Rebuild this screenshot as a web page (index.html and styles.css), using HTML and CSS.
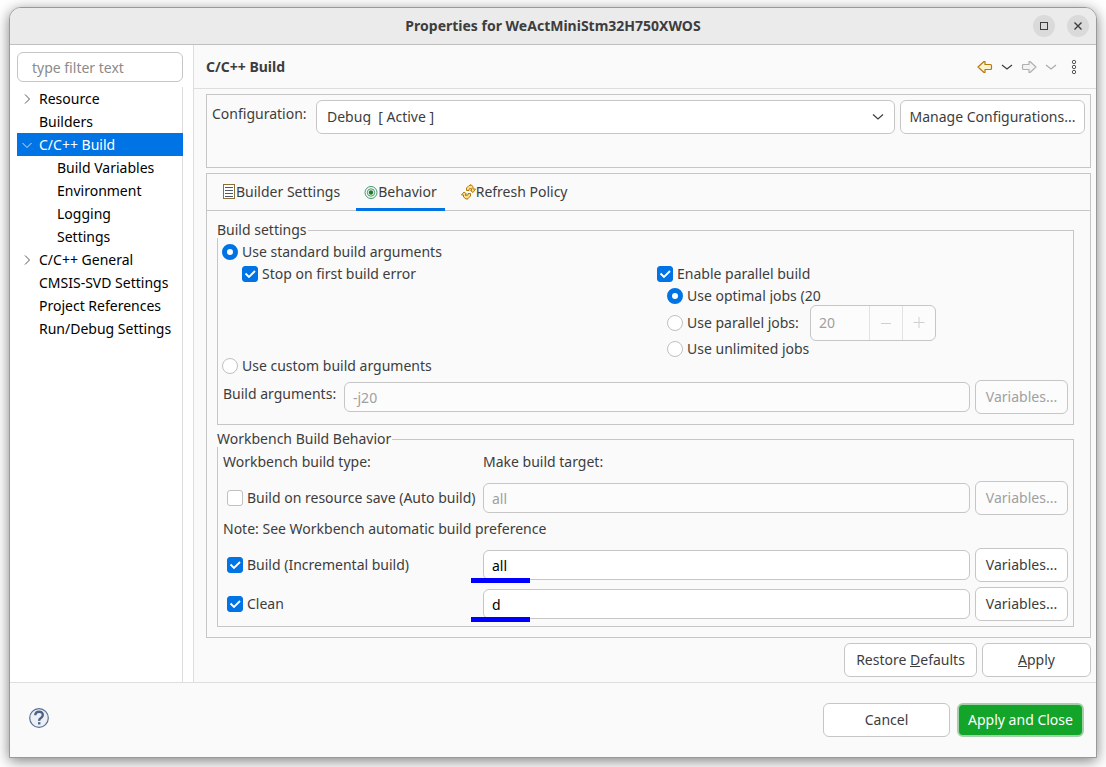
FILE: index.html
```html
<!DOCTYPE html>
<html lang="en">
<head>
  <meta charset="UTF-8">
  <title>Properties for WeActMiniStm32H750XWOS</title>
  <link rel="stylesheet" href="styles.css">
</head>

<body>

  <div class="window">
    <div class="titlebar">
      <h1>Properties for WeActMiniStm32H750XWOS</h1>
      <div class="window-buttons">
        <button type="button" aria-label="Maximize">
          <svg width="10" height="10" viewBox="0 0 10 10"><rect x="1.500" y="1.500" width="7" height="7" fill="none" stroke="#3d3d3d"/></svg>
        </button>
        <button type="button" aria-label="Close">
          <svg width="10" height="10" viewBox="0 0 10 10"><path d="M1.500 1.500l7 7M8.500 1.500l-7 7" fill="none" stroke="#3d3d3d" stroke-width="1.400"/></svg>
        </button>
      </div>
    </div>

    <div class="main">
      <div class="sidebar">
        <input type="text" class="filter" placeholder="type filter text" aria-label="Filter">
        <ul class="tree">
          <li><svg class="arrow" width="10" height="10" viewBox="0 0 10 10"><path d="M3 0.500l4.500 4.500l-4.500 4.500"/></svg>Resource</li>
          <li>Builders</li>
          <li class="selected"><svg class="arrow" width="10" height="10" viewBox="0 0 10 10"><path d="M0.500 3l4.500 4.500l4.500-4.500"/></svg>C/C++ Build</li>
          <li class="child">Build Variables</li>
          <li class="child">Environment</li>
          <li class="child">Logging</li>
          <li class="child">Settings</li>
          <li><svg class="arrow" width="10" height="10" viewBox="0 0 10 10"><path d="M3 0.500l4.500 4.500l-4.500 4.500"/></svg>C/C++ General</li>
          <li>CMSIS-SVD Settings</li>
          <li>Project References</li>
          <li>Run/Debug Settings</li>
        </ul>
      </div>

      <div class="page">
        <div class="page-header">
          <h2>C/C++ Build</h2>
          <div class="nav">
            <button type="button" aria-label="Back">
              <svg width="16" height="14" viewBox="0 0 16 14"><path d="M1 7l6-5.500h1v3h5.500q1 0 1 1v3q0 1-1 1H8v3H7z" fill="#fdf3cc" stroke="#b5790f" stroke-width="1.200" stroke-linejoin="round"/></svg>
            </button>
            <button type="button" aria-label="Back history">
              <svg width="12" height="8" viewBox="0 0 12 8"><path d="M1 2l5 4l5-4" fill="none" stroke="#3d3d3d" stroke-width="1.200"/></svg>
            </button>
            <button type="button" aria-label="Forward" disabled>
              <svg width="16" height="14" viewBox="0 0 16 14"><path d="M15 7L9 1.500H8v3H2.500q-1 0-1 1v3q0 1 1 1H8v3h1z" fill="#f3f3f3" stroke="#b0b0b0" stroke-width="1.200" stroke-linejoin="round"/></svg>
            </button>
            <button type="button" aria-label="Forward history" disabled>
              <svg width="12" height="8" viewBox="0 0 12 8"><path d="M1 2l5 4l5-4" fill="none" stroke="#aaa" stroke-width="1.200"/></svg>
            </button>
            <button type="button" aria-label="Menu" class="menu">
              <svg width="6" height="16" viewBox="0 0 6 16"><g fill="none" stroke="#555"><circle cx="3" cy="3" r="1.700"/><circle cx="3" cy="8" r="1.700"/><circle cx="3" cy="13" r="1.700"/></g></svg>
            </button>
          </div>
        </div>

        <div class="content">
          <div class="config">
            <label for="configuration">Configuration:</label>
            <div class="combo">
              <select id="configuration">
                <option>Debug&nbsp; [ Active ]</option>
                <option>Release</option>
              </select>
              <svg width="12" height="8" viewBox="0 0 12 8"><path d="M1 1.500l5 4.500l5-4.500" fill="none" stroke="#3d3d3d" stroke-width="1.200"/></svg>
            </div>
            <button type="button" class="btn">Manage Configurations...</button>
          </div>

          <div class="panel">
            <div class="tabs" role="tablist">
              <button type="button" role="tab">
                <svg width="14" height="16" viewBox="0 0 14 16"><rect x="1.500" y="0.500" width="11" height="14" fill="#fff" stroke="#8a7038"/><path d="M3 3.500h8M3 6.500h8M3 9.500h8M3 12.500h8" stroke="#4a5a6c"/></svg>Builder Settings
              </button>
              <button type="button" role="tab" class="active" aria-selected="true">
                <svg width="14" height="16" viewBox="0 0 14 16"><g fill="none" stroke="#3f9a68"><circle cx="7" cy="8.500" r="6"/><circle cx="7" cy="8.500" r="3.700"/></g><circle cx="7" cy="8.500" r="2.200" fill="#1f7a2a"/></svg>Behavior
              </button>
              <button type="button" role="tab">
                <svg width="15" height="16" viewBox="0 0 15 16"><g fill="#fbe08a" stroke="#b5790f" stroke-linejoin="round"><path d="M5.500 6.500V4L8 1.500h1.500v-1l2.500 2v2.500h2.500L12 8.500L9.500 6.500h1V4.500L8 5v1.500z"/><path d="M9.500 9.500v2.500L7 14.500v0.500H5L2.500 13v-2H0.500L3 8l2.500 2h-1v1.500L7 11V9.500z"/></g></svg>Refresh Policy
              </button>
            </div>

            <form class="panel-body">
              <fieldset>
                <legend>Build settings</legend>
                <label class="option"><input type="radio" name="arguments" checked>Use standard build arguments</label>
                <div class="standard">
                  <div class="left">
                    <label class="option"><input type="checkbox" checked>Stop on first build error</label>
                  </div>
                  <div class="right">
                    <label class="option"><input type="checkbox" checked>Enable parallel build</label>
                    <div class="jobs">
                      <label class="option optimal"><input type="radio" name="jobs" checked>Use optimal jobs (20)</label>
                      <div class="parallel">
                        <label class="option"><input type="radio" name="jobs">Use parallel jobs:</label>
                        <div class="spinner">
                          <input type="text" value="20" aria-label="Parallel jobs" disabled>
                          <button type="button" aria-label="Decrease" disabled><svg width="12" height="12" viewBox="0 0 12 12"><path d="M1 6.500h10" stroke="#d0d0d0"/></svg></button>
                          <button type="button" aria-label="Increase" disabled><svg width="12" height="12" viewBox="0 0 12 12"><path d="M0.500 5.500h11M6 0v11" stroke="#d0d0d0"/></svg></button>
                        </div>
                      </div>
                      <label class="option"><input type="radio" name="jobs">Use unlimited jobs</label>
                    </div>
                  </div>
                </div>
                <label class="option"><input type="radio" name="arguments">Use custom build arguments</label>
                <div class="arguments">
                  <label for="arguments">Build arguments:</label>
                  <input type="text" class="text" id="arguments" value="-j20" disabled>
                  <button type="button" class="btn" disabled>Variables...</button>
                </div>
              </fieldset>

              <fieldset>
                <legend>Workbench Build Behavior</legend>
                <div class="targets">
                  <span>Workbench build type:</span>
                  <span class="wide">Make build target:</span>

                  <label class="option"><input type="checkbox">Build on resource save (Auto build)</label>
                  <div class="target"><input type="text" class="text" value="all" aria-label="Auto build target" disabled></div>
                  <button type="button" class="btn" disabled>Variables...</button>

                  <span class="note">Note: See Workbench automatic build preference</span>

                  <label class="option"><input type="checkbox" checked>Build (Incremental build)</label>
                  <div class="target marked"><input type="text" class="text" value="all" aria-label="Incremental build target"></div>
                  <button type="button" class="btn">Variables...</button>

                  <label class="option last"><input type="checkbox" checked>Clean</label>
                  <div class="target marked last"><input type="text" class="text" value="d" aria-label="Clean target"></div>
                  <button type="button" class="btn last">Variables...</button>
                </div>
              </fieldset>
            </form>
          </div>

          <div class="page-buttons">
            <button type="button" class="btn restore">Restore <u>D</u>efaults</button>
            <button type="button" class="btn apply"><u>A</u>pply</button>
          </div>
        </div>
      </div>
    </div>

    <div class="footer">
      <button type="button" class="help" aria-label="Help">
        <svg width="20" height="20" viewBox="0 0 20 20"><circle cx="10" cy="10" r="9.300" fill="#eceff3" stroke="#5b6f94" stroke-width="1.200"/><path d="M6.300 7.300q0-3.500 3.800-3.500t3.700 3.200q0 1.700-1.900 2.900t-1.700 2.900" fill="none" stroke="#4d6088" stroke-width="2.400"/><rect x="9" y="14.200" width="2.400" height="2.200" fill="#4d6088"/></svg>
      </button>
      <button type="button" class="btn big">Cancel</button>
      <button type="button" class="btn big primary">Apply and Close</button>
    </div>
  </div>

</body>
</html>
```
FILE: styles.css
```css
* {
  box-sizing: border-box;
}

body {
  font-family: "Noto Sans", sans-serif;
  font-size: 14px;
  line-height: 16px;
  color: #3d3d3d;
  background: #fff;
  margin: 0;
  padding: 7px 9px 9px;
  min-height: 100vh;
  display: flex;
}

input,
select,
button {
  font: inherit;
  color: inherit;
  margin: 0;
}

button {
  padding: 0;
  border: none;
  background: none;
}

svg {
  flex: none;
}

.window {
  flex: 1;
  display: flex;
  flex-direction: column;
  background: #fafafa;
  border: 1px solid #999;
  border-radius: 12px 12px 0 0;
  box-shadow: 0 3px 14px rgba(0, 0, 0, 0.5);
  overflow: hidden;
}

/* title bar */
.titlebar {
  height: 37px;
  background: #ebebeb;
  border-bottom: 1px solid #bfbfbf;
  display: grid;
  grid-template-columns: 1fr auto 1fr;
  align-items: center;
}

.titlebar h1 {
  grid-column: 2;
  margin: 0;
  font-size: 14px;
}

.window-buttons {
  display: flex;
  justify-content: flex-end;
  gap: 12px;
  padding-right: 7px;
}

.window-buttons button {
  width: 22px;
  height: 22px;
  border-radius: 50%;
  background: #dadada;
  display: flex;
  align-items: center;
  justify-content: center;
}

.main {
  flex: 1;
  display: flex;
  border-bottom: 1px solid #dedede;
}

/* tree */
.sidebar {
  width: 184px;
  flex: none;
  display: flex;
  flex-direction: column;
  background: #fff;
  border-right: 1px solid #dedede;
  padding: 7px 10px 0 7px;
}

.filter,
.text {
  width: 100%;
  height: 30px;
  border: 1px solid #c6c6c6;
  border-radius: 6px;
  background: #fff;
  padding: 0 8px;
  color: #000;
}

.filter {
  padding: 0 14px;
}

.filter::placeholder {
  color: #8b8b8b;
}

.tree {
  flex: 1;
  list-style: none;
  margin: 5px 0 0;
  padding: 0;
  border-right: 1px solid #dedede;
  color: #000;
}

.tree li {
  position: relative;
  height: 23px;
  line-height: 23px;
  padding-left: 22px;
  white-space: nowrap;
}

.tree .child {
  padding-left: 40px;
}

.tree .selected {
  background: #0073e5;
  color: #fff;
  margin-right: -1px;
}

.arrow {
  position: absolute;
  left: 5px;
  top: 7px;
  fill: none;
  stroke: #555;
}

.selected .arrow {
  stroke: #cfe3fa;
}

/* page */
.page {
  flex: 1;
  min-width: 0;
}

.page-header {
  height: 44px;
  display: flex;
  align-items: center;
  justify-content: space-between;
  border-bottom: 1px solid #dedede;
  padding: 0 19px 0 12px;
}

.page-header h2 {
  margin: 0;
  font-size: 14px;
}

.nav {
  display: flex;
  align-items: center;
  gap: 8px;
}

.nav button {
  display: flex;
}

.nav .menu {
  margin-left: 6px;
}

.content {
  padding: 5px 5px 5px 12px;
}

.btn {
  height: 34px;
  border: 1px solid #c6c6c6;
  border-radius: 6px;
  background: #fff;
  white-space: nowrap;
}

.btn:disabled,
.text:disabled {
  background: #fcfcfc;
  color: #a0a0a0;
}

.config {
  display: flex;
  gap: 5px;
  border: 1px solid #c6c6c6;
  padding: 5px 5px 33px;
}

.config label {
  width: 99px;
  padding-top: 6px;
  white-space: nowrap;
}

.config .btn {
  width: 185px;
}

.combo {
  position: relative;
  flex: 1;
}

.combo select {
  appearance: none;
  width: 100%;
  height: 34px;
  border: 1px solid #c6c6c6;
  border-radius: 6px;
  background: #fff;
  padding: 0 10px;
}

.combo svg {
  position: absolute;
  right: 11px;
  top: 13px;
  pointer-events: none;
}

.panel {
  margin-top: 5px;
  border: 1px solid #c6c6c6;
}

.tabs {
  display: flex;
  gap: 8px;
  height: 37px;
  padding-left: 7px;
  border-bottom: 1px solid #c6c6c6;
}

.tabs button {
  display: flex;
  align-items: center;
  height: 37px;
  padding: 2px 8px 0;
  border-bottom: 3px solid transparent;
  white-space: nowrap;
}

.tabs .active {
  border-color: #0073e5;
}

.panel-body {
  padding: 11px 16px 10px 10px;
}

fieldset {
  min-width: 0;
  margin: 0;
  border: 1px solid #c6c6c6;
  padding: 6px 5px 10px 4px;
}

fieldset + fieldset {
  margin-top: 6px;
  padding: 7px 5px 5px;
}

legend {
  margin-left: -5px;
  padding: 0 1px 0 0;
  background: #fafafa;
}

fieldset + fieldset legend {
  margin-left: -6px;
}

.option {
  display: flex;
  align-items: center;
  gap: 4px;
  height: 16px;
  white-space: nowrap;
}

.option input {
  appearance: none;
  flex: none;
  width: 16px;
  height: 16px;
  border: 1px solid #c0c0c0;
  border-radius: 3px;
  background: #fff;
}

.option input[type="radio"] {
  border-radius: 50%;
}

.option input[type="radio"]:checked {
  border: 5px solid #0073e5;
}

.option input[type="checkbox"]:checked {
  border-color: #0073e5;
  background: #0073e5 url("data:image/svg+xml,%3Csvg xmlns='http://www.w3.org/2000/svg' viewBox='0 0 14 14'%3E%3Cpath d='M2.500 6.500l3.500 3.500l6-6' fill='none' stroke='white' stroke-width='1.800'/%3E%3C/svg%3E");
}

.standard {
  display: grid;
  grid-template-columns: 1fr 1fr;
  padding-top: 6px;
}

.standard .left {
  padding-left: 20px;
}

.standard .right {
  padding-left: 12px;
}

.jobs {
  padding: 6px 0 1px 10px;
}

.optimal {
  width: 154px;
  overflow: hidden;
}

.parallel {
  display: flex;
  align-items: center;
  gap: 8px;
  margin-top: 1px;
}

.parallel .option {
  width: 135px;
}

.spinner {
  display: flex;
  width: 126px;
  height: 36px;
  border: 1px solid #c6c6c6;
  border-radius: 6px;
  background: #fcfcfc;
}

.spinner input {
  flex: 1;
  min-width: 0;
  border: none;
  background: none;
  padding: 0 8px;
  color: #a0a0a0;
}

.spinner button {
  width: 33px;
  border-left: 1px solid #e2e2e2;
  display: flex;
  align-items: center;
  justify-content: center;
}

.arguments {
  display: flex;
  align-items: center;
  gap: 5px;
  padding: 6px 0 0 1px;
}

.arguments label {
  width: 116px;
  margin-bottom: 6px;
  white-space: nowrap;
}

.arguments .text {
  flex: 1;
  min-width: 0;
}

.arguments .btn {
  width: 93px;
}

.targets {
  display: grid;
  grid-template-columns: 255px 1fr 93px;
  gap: 11px 5px;
  align-items: center;
}

.targets .option {
  padding-left: 4px;
}

.targets .wide {
  grid-column: 2 / 4;
}

.targets .note {
  grid-column: 1 / 4;
  margin-top: -5px;
}

.targets .last {
  margin-top: -6px;
}

.target {
  position: relative;
}

/* highlighted values */
.marked::after {
  content: "";
  position: absolute;
  left: -12px;
  bottom: -3px;
  width: 59px;
  height: 5px;
  background: #0000ff;
}

.page-buttons {
  display: flex;
  justify-content: flex-end;
  gap: 5px;
  padding-top: 5px;
}

.restore {
  width: 133px;
}

.apply {
  width: 109px;
}

/* dialog buttons */
.footer {
  display: flex;
  align-items: center;
  gap: 7px;
  height: 74px;
  padding: 0 12px 0 19px;
}

.help {
  display: flex;
  margin: 0 auto 4px 0;
}

.big {
  width: 127px;
}

.primary {
  border: 2px solid #a3cfa9;
  background: #12a529;
  color: #fff;
}
```
